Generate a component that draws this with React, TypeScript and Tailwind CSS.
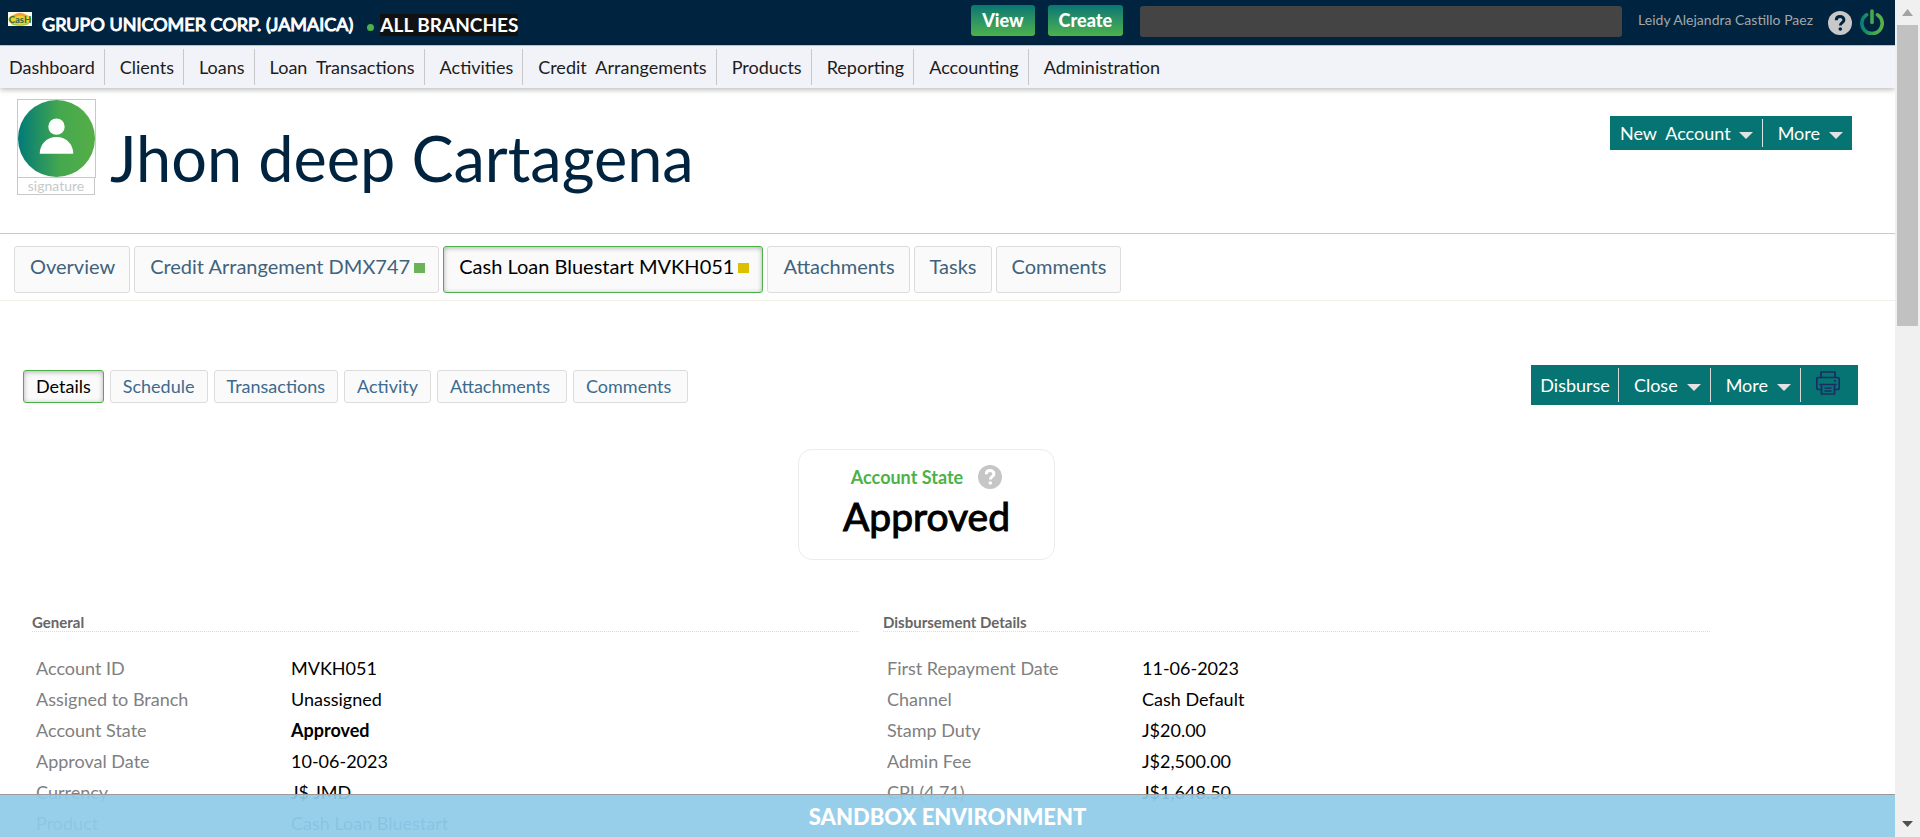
import React from "react";

const navItems = [
  "Dashboard",
  "Clients",
  "Loans",
  "Loan\u00a0 Transactions",
  "Activities",
  "Credit\u00a0 Arrangements",
  "Products",
  "Reporting",
  "Accounting",
  "Administration",
];

type Tab = { label: string; active?: boolean; marker?: "green" | "yellow"; wide?: boolean };

const clientTabs: Tab[] = [
  { label: "Overview" },
  { label: "Credit Arrangement DMX747", marker: "green" },
  { label: "Cash Loan Bluestart MVKH051", active: true, marker: "yellow" },
  { label: "Attachments" },
  { label: "Tasks" },
  { label: "Comments" },
];

const accountTabs: Tab[] = [
  { label: "Details", active: true },
  { label: "Schedule" },
  { label: "Transactions" },
  { label: "Activity" },
  { label: "Attachments", wide: true },
  { label: "Comments", wide: true },
];

type Row = { label: string; value: string; strong?: boolean; link?: boolean };

const general: Row[] = [
  { label: "Account ID", value: "MVKH051" },
  { label: "Assigned to Branch", value: "Unassigned" },
  { label: "Account State", value: "Approved", strong: true },
  { label: "Approval Date", value: "10-06-2023" },
  { label: "Currency", value: "J$ JMD" },
  { label: "Product", value: "Cash Loan Bluestart", link: true },
];

const disbursement: Row[] = [
  { label: "First Repayment Date", value: "11-06-2023" },
  { label: "Channel", value: "Cash Default" },
  { label: "Stamp Duty", value: "J$20.00" },
  { label: "Admin Fee", value: "J$2,500.00" },
  { label: "CPI (4.71)", value: "J$1,648.50" },
];

function Logo() {
  return (
    <svg width="24" height="14" viewBox="0 0 24 14" aria-hidden="true">
      <rect width="24" height="14" fill="#fdfaf0" />
      <ellipse cx="12" cy="7.500" rx="11.500" ry="6" fill="#f3d32a" />
      <path d="M5 3.500Q12 -2 19 3.500L17 5Q12 2.500 7 5Z" fill="#f2a03a" />
      <path d="M2 10Q12 15.500 22 10L20 12.500Q12 15 4 12.500Z" fill="#9cc43a" />
      <text x="12" y="11" textAnchor="middle" fontFamily="Lato, sans-serif" fontSize="9.500" fontWeight="900" fill="#35704a">
        CasH
      </text>
    </svg>
  );
}

function Avatar() {
  return (
    <svg width="77" height="77" viewBox="0 0 78 78" aria-hidden="true">
      <defs>
        <linearGradient id="avatarFill" x1="0" x2="1" y1="0" y2="0">
          <stop offset="0" stopColor="#007a78" />
          <stop offset="0.55" stopColor="#45a84e" />
          <stop offset="1" stopColor="#55ae47" />
        </linearGradient>
      </defs>
      <circle cx="39" cy="39" r="39" fill="url(#avatarFill)" />
      <circle cx="39" cy="27" r="8.300" fill="#fff" />
      <path d="M22 54.500C22 45 29 37.500 39 37.500S56 45 56 54.500Z" fill="#fff" />
    </svg>
  );
}

function HelpIcon({ bg, fg }: { bg: string; fg: string }) {
  return (
    <svg width="24" height="24" viewBox="0 0 24 24" aria-hidden="true">
      <circle cx="12" cy="12" r="12" fill={bg} />
      <path d="M8.300 9.300C8.300 6.800 10 5.500 12.100 5.500s3.800 1.300 3.800 3.400c0 2.700-3.500 2.800-3.500 5.500" fill="none" stroke={fg} strokeWidth="3" />
      <circle cx="12.300" cy="18" r="1.800" fill={fg} />
    </svg>
  );
}

function PowerIcon() {
  return (
    <svg width="24" height="26" viewBox="0 0 24 26" fill="none" strokeWidth="3.600" strokeLinecap="round" aria-hidden="true">
      <defs>
        <linearGradient id="powerStroke" gradientUnits="userSpaceOnUse" x1="0" x2="24" y1="0" y2="0">
          <stop offset="0" stopColor="#007a78" />
          <stop offset="0.600" stopColor="#45a84e" />
          <stop offset="1" stopColor="#5ab446" />
        </linearGradient>
      </defs>
      <path d="M6.500 5.800A10.200 10.200 0 1 0 17.500 5.800" stroke="url(#powerStroke)" />
      <path d="M12 2v11.500" stroke="#45a84e" />
    </svg>
  );
}

function PrinterIcon() {
  return (
    <svg width="24" height="24" viewBox="0 0 24 24" fill="none" stroke="#1c2c63" strokeWidth="1.700" strokeLinejoin="round" aria-hidden="true">
      <path d="M5 6.500V1h14v5.500" />
      <path d="M5 18.500H2.200A1.400 1.400 0 0 1 .8 17V8A1.400 1.400 0 0 1 2.200 6.500h19.600A1.400 1.400 0 0 1 23.200 8v9a1.400 1.400 0 0 1-1.400 1.500H19" />
      <path d="M3.500 13.500h17M5.500 13.500V23h13v-9.500M8.500 17h7M8.500 20h7" />
      <path d="M18 9.800h1.800" strokeWidth="1.800" />
    </svg>
  );
}

function Caret() {
  return (
    <svg width="14" height="7" viewBox="0 0 14 7" aria-hidden="true">
      <path d="M0 0h14L7 7Z" fill="#e2e2e2" />
    </svg>
  );
}

function HeaderButton({ children }: { children: React.ReactNode }) {
  return (
    <button className="h-[31px] rounded-[3px] bg-linear-to-b from-[#057672] to-[#4cb247] px-[11px] text-[18px] leading-[31px] font-black text-white">
      {children}
    </button>
  );
}

function Table({ title, rows }: { title: string; rows: Row[] }) {
  return (
    <section className="w-[827px] min-w-0">
      <h2 className="border-b border-dotted border-[#dcdcdc] text-[15px] leading-[18px] font-bold text-[#666]">{title}</h2>
      <table className="mt-[21px] text-left text-[18px] leading-[31px]">
        <tbody>
          {rows.map((r) => (
            <tr key={r.label}>
              <th scope="row" className="w-[259px] pl-1 font-normal text-[#808080]">{r.label}</th>
              <td className={r.strong ? "font-bold text-black" : "text-black"}>
                {r.link ? <a href="#product" className="text-[#3c6b8e]">{r.value}</a> : r.value}
              </td>
            </tr>
          ))}
        </tbody>
      </table>
    </section>
  );
}

export default function App() {
  return (
    <div className="flex h-screen overflow-hidden bg-white font-['Lato',sans-serif] text-black">
      <div className="relative min-w-0 flex-1 overflow-hidden">
        <header className="flex h-[46px] items-start border-b border-[#c3ccd5] bg-[#00233f] text-white">
          <div className="flex h-full flex-1 items-start pl-2">
            <div className="pt-3"><Logo /></div>
            <span className="ml-[10px] pt-[13px] text-[18px] leading-[22px] whitespace-nowrap [-webkit-text-stroke:1px_#fff]">GRUPO UNICOMER CORP. (JAMAICA)</span>
            <span className="mt-6 ml-[14px] size-[7px] rounded-full bg-[#4cb247]" />
            <span className="mt-[14px] ml-[6px] bg-[#111] text-[19px] leading-[22px] font-bold whitespace-nowrap">ALL BRANCHES</span>
          </div>
          <div className="flex items-start gap-[13px] pt-[5px]">
            <HeaderButton>View</HeaderButton>
            <HeaderButton>Create</HeaderButton>
          </div>
          <input type="search" aria-label="Search" className="mt-[6px] ml-[17px] h-[31px] w-[482px] rounded-[3px] bg-[#444] px-2 text-[16px]" />
          <span className="mt-[11px] ml-4 text-[14px] leading-[18px] whitespace-nowrap text-[#a3a7aa]">Leidy Alejandra Castillo Paez</span>
          <button aria-label="Help" className="mt-[11px] ml-[15px]"><HelpIcon bg="#c8c8c8" fg="#00233f" /></button>
          <button aria-label="Log out" className="mt-[9px] mr-[11px] ml-2"><PowerIcon /></button>
        </header>

        <nav className="flex h-[42px] items-center bg-[#f2f3f8] shadow-[0_2px_5px_rgba(0,0,0,0.25)]">
          {navItems.map((item, i) => (
            <a
              key={item}
              href="#nav"
              className={
                (i === 0 ? "pl-[9px] " : "pl-[15px] ") +
                (i < navItems.length - 1 ? "border-r border-[#c8c8c8] " : "") +
                "h-9 pr-[9px] text-[18px] leading-9 whitespace-nowrap text-[#1c1c1c]"
              }
            >
              {item}
            </a>
          ))}
        </nav>

        <div className="flex h-[146px] items-start border-b border-[#c8c8c8] pt-[11px] pl-[17px]">
          <div className="w-[79px]">
            <div className="border border-[#c8c8c8]"><Avatar /></div>
            <div className="h-[17px] w-[78px] border border-t-0 border-[#c8c8c8] text-center text-[14px] leading-[15px] text-[#c8c8c8]">signature</div>
          </div>
          <h1 className="mt-[21px] ml-[14px] flex-1 text-[63px] leading-[76px] text-[#00233f]">Jhon deep Cartagena</h1>
          <div className="mt-[17px] mr-[43px] flex h-[34px] items-center bg-[#067472] text-[18px] text-white">
            <button className="flex h-7 items-center gap-2 border-r border-[#d8e6e6] pr-[9px] pl-[10px]">{"New\u00a0 Account"}<span className="pt-1"><Caret /></span></button>
            <button className="flex h-7 items-center gap-[9px] pr-[9px] pl-[15px]">More<span className="pt-1"><Caret /></span></button>
          </div>
        </div>

        <nav className="flex h-[67px] gap-1 border-b border-[#f0f0e6] pt-3 pl-[14px]">
          {clientTabs.map((t) => (
            <a
              key={t.label}
              href="#tab"
              className={
                "flex h-[47px] items-center rounded-[3px] border bg-[#fafafa] pb-2 pl-[15px] text-[20px] leading-6 whitespace-nowrap " +
                (t.marker ? "pr-[13px] " : "pr-[14px] ") +
                (t.active
                  ? "border-[#4cb247] text-black shadow-[inset_0_1px_5px_rgba(0,0,0,0.3)]"
                  : "border-[#dcdcdc] text-[#3f637d]")
              }
            >
              {t.label}
              {t.marker && (
                <span className={"mt-1 ml-1 h-[10px] w-[11px] " + (t.marker === "green" ? "bg-[#6cb257]" : "bg-[#dcc000]")} />
              )}
            </a>
          ))}
        </nav>

        <div className="flex items-start justify-between pt-16 pr-[37px] pl-[23px]">
          <nav className="mt-[5px] flex gap-[6px]">
            {accountTabs.map((t) => (
              <a
                key={t.label}
                href="#section"
                className={
                  "h-[33px] rounded-[3px] border bg-[#fafafa] pl-3 text-[18px] leading-[31px] whitespace-nowrap " +
                  (t.wide ? "pr-4 " : "pr-3 ") +
                  (t.active
                    ? "border-[#4cb247] text-black shadow-[inset_0_1px_5px_rgba(0,0,0,0.3)]"
                    : "border-[#dcdcdc] text-[#3c6b8e]")
                }
              >
                {t.label}
              </a>
            ))}
          </nav>
          <div className="flex h-10 items-center bg-[#067472] text-[18px] text-white">
            <button className="h-[34px] border-r border-[#d8d8d8] pr-2 pl-[9px]">Disburse</button>
            <button className="flex h-[34px] items-center gap-[9px] border-r border-[#d8d8d8] pr-[9px] pl-[15px]">Close<span className="pt-1"><Caret /></span></button>
            <button className="flex h-[34px] items-center gap-[9px] border-r border-[#d8d8d8] pr-[9px] pl-[15px]">More<span className="pt-1"><Caret /></span></button>
            <button aria-label="Print" className="pr-[18px] pb-1 pl-[15px]"><PrinterIcon /></button>
          </div>
        </div>

        <div className="mt-11 mr-[42px] flex justify-center">
          <div className="h-[111px] w-[257px] rounded-[14px] border border-[#ececec] pt-[15px] text-center">
            <div className="flex items-center justify-center gap-[15px] text-[18px] leading-6 font-bold text-[#4cb247]">
              Account State
              <button aria-label="About account state"><HelpIcon bg="#c6c6c6" fg="#fff" /></button>
            </div>
            <div className="mt-1 text-[39px] leading-[46px] [-webkit-text-stroke:1px_#000]">Approved</div>
          </div>
        </div>

        <main className="mt-[53px] flex gap-6 px-8">
          <Table title="General" rows={general} />
          <Table title="Disbursement Details" rows={disbursement} />
        </main>

        <div className="absolute inset-x-0 bottom-0 h-[43px] border-t border-[#9a9a9a] bg-[#8ecbe9]/92 text-center text-[22px] leading-[44px] font-black text-white">
          SANDBOX ENVIRONMENT
        </div>
      </div>

      <div className="flex w-[25px] flex-col items-center bg-[#f0f0f0]" aria-hidden="true">
        <svg className="my-[9px]" width="11" height="7" viewBox="0 0 11 7"><path d="M0 7 5.500 0 11 7Z" fill="#a3a3a3" /></svg>
        <div className="h-[301px] w-[21px] bg-[#c1c1c1]" />
        <svg className="mt-auto mb-[10px]" width="11" height="6" viewBox="0 0 11 6"><path d="M0 0h11L5.500 6Z" fill="#505050" /></svg>
      </div>
    </div>
  );
}
